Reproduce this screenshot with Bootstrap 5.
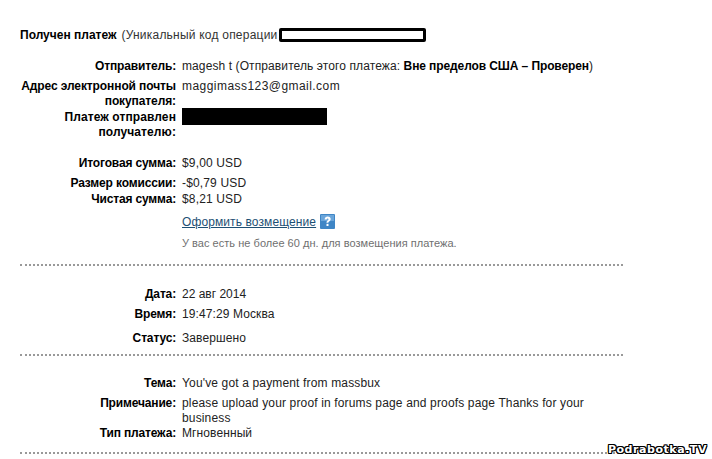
<!DOCTYPE html>
<html lang="ru">
<head>
<meta charset="utf-8">
<title>Получен платеж</title>
<link href="https://cdn.jsdelivr.net/npm/bootstrap@5.3.0/dist/css/bootstrap.min.css" rel="stylesheet">
<style>
html,body{height:459px;overflow:hidden;background:#fff}
body{position:relative;font:12px/15px "Liberation Sans",Arial,sans-serif;color:#222;padding:28px 0 0 20px;letter-spacing:.15px}
.sheet{width:603px}
.headline{height:15px;color:#333;white-space:nowrap;letter-spacing:.22px}
.headline b{color:#000;letter-spacing:0;margin-right:5px}
.codebox{display:inline-block;width:147px;height:14px;border:3px solid #000;border-radius:2px;vertical-align:top;margin-left:1px}
.line{display:flex;gap:6px}
.tag{width:156px;flex:none;text-align:right;font-weight:700;color:#000;letter-spacing:-.15px;white-space:nowrap}
.snug{letter-spacing:-.1px}
.wide{letter-spacing:.1px}
.val{flex:1;min-width:0;padding-right:30px}
.val b{color:#000;letter-spacing:-.1px}
.blackout{width:145px;height:17px;background:#000;margin-top:-2px}
.refund{color:#1d4f74;text-decoration:underline;letter-spacing:.1px}
.qmark{display:inline-block;width:15px;height:15px;margin-left:4px;vertical-align:-3px}
.hint{color:#6f6f6f;font-size:11px;letter-spacing:.03px}
.dots{border-top:2px dotted #999;height:0}
.stamp{position:absolute;right:5px;bottom:3px;font:700 11px/13px "DejaVu Sans",sans-serif;color:#fff;letter-spacing:.55px;text-shadow:1px 0 #000,-1px 0 #000,0 1px #000,0 -1px #000,1px 1px #000,-1px -1px #000,1px -1px #000,-1px 1px #000}
.lat{letter-spacing:.45px}.cyr{letter-spacing:.1px}.tight{letter-spacing:0}
.up1{margin-top:1px}.up5{margin-top:5px}.up6{margin-top:6px}.up7{margin-top:7px}.up8{margin-top:8px}.up9{margin-top:9px}.up11{margin-top:11px}.up13{margin-top:13px}.up16{margin-top:16px}.up20{margin-top:20px}.up21{margin-top:21px}
</style>
</head>
<body>
<main class="sheet">
  <div class="headline"><b>Получен платеж</b>(Уникальный код операции<span class="codebox"></span></div>

  <div class="line up16"><div class="tag">Отправитель:</div><div class="val text-nowrap cyr">magesh t (Отправитель этого платежа: <b>Вне пределов США – Проверен</b>)</div></div>
  <div class="line up5"><div class="tag snug">Адрес электронной почты<br>покупателя:</div><div class="val lat">maggimass123@gmail.com</div></div>
  <div class="line up1"><div class="tag wide">Платеж отправлен<br>получателю:</div><div class="val"><div class="blackout"></div></div></div>

  <div class="line up16"><div class="tag">Итоговая сумма:</div><div class="val">$9,00 USD</div></div>
  <div class="line up5"><div class="tag">Размер комиссии:</div><div class="val">-$0,79 USD</div></div>
  <div class="line up1"><div class="tag">Чистая сумма:</div><div class="val">$8,21 USD</div></div>
  <div class="line up7"><div class="tag"></div><div class="val"><a class="refund" href="#">Оформить возмещение</a><svg class="qmark" viewBox="0 0 15 15"><rect width="15" height="15" rx="1" fill="#3f86c6"/><rect x="1" y="1" width="13" height="6" fill="#6aa5da"/><path d="M4.600 5.600C4.700 3.600 6 2.600 7.700 2.600c1.800 0 3 1 3 2.500 0 1.200-.7 1.800-1.500 2.300-.6.400-.8.700-.8 1.300H6.500c0-1.100.3-1.600 1.100-2.200.6-.4.900-.7.900-1.200 0-.5-.3-.8-.8-.8-.6 0-.9.300-1 1.100z" fill="#fff"/><rect x="6.500" y="9.800" width="2" height="2.200" fill="#fff"/></svg></div></div>
  <div class="line up6"><div class="tag"></div><div class="val hint">У вас есть не более 60 дн. для возмещения платежа.</div></div>
  <div class="dots up13"></div>

  <div class="line up21"><div class="tag">Дата:</div><div class="val tight">22 авг 2014</div></div>
  <div class="line up5"><div class="tag">Время:</div><div class="val cyr">19:47:29 Москва</div></div>
  <div class="line up9"><div class="tag">Статус:</div><div class="val cyr">Завершено</div></div>
  <div class="dots up8"></div>

  <div class="line up20"><div class="tag">Тема:</div><div class="val">You've got a payment from massbux</div></div>
  <div class="line up5"><div class="tag">Примечание:</div><div class="val">please upload your proof in forums page and proofs page Thanks for your business</div></div>
  <div class="line"><div class="tag">Тип платежа:</div><div class="val cyr">Мгновенный</div></div>
  <div class="dots up11"></div>
</main>
<div class="stamp">Podrabotka.TV</div>
</body>
</html>
